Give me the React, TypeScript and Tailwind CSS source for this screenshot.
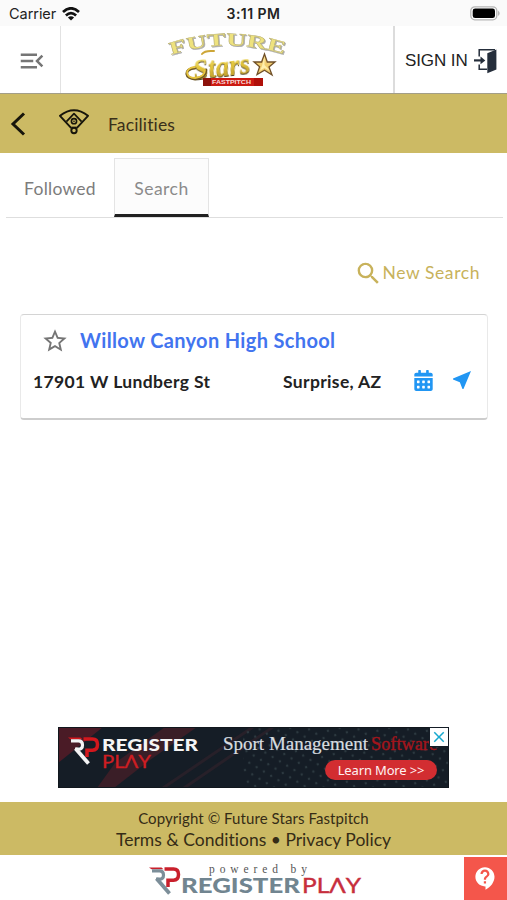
import { MdClose, MdContactSupport, MdMenuOpen, MdNearMe, MdSearch, MdStarBorder } from "react-icons/md";
import { FaCalendarAlt } from "react-icons/fa";

function WifiIcon() {
  return (
    <svg width="18" height="14" viewBox="0 0 18 14" fill="none" stroke="#111" strokeWidth="2.7">
      <path d="M1 5 Q9 -2.4 17 5" />
      <path d="M3.9 8.4 Q9 3.7 14.1 8.4" />
      <path d="M9 13.6 L5.9 10.4 Q9 7.9 12.1 10.4 Z" fill="#111" stroke="none" />
    </svg>
  );
}

function BatteryIcon() {
  return (
    <svg width="31" height="15" viewBox="0 0 31 15">
      <rect x="0.8" y="0.8" width="26" height="13" rx="4" fill="#fff" stroke="#b5b5b5" strokeWidth="1.3" />
      <rect x="2.7" y="2.5" width="22.3" height="9.6" rx="2.4" fill="#000" />
      <path d="M28.2 4.5 Q31 7.3 28.2 10.1 Z" fill="#aaa" />
    </svg>
  );
}

function FutureStarsLogo() {
  return (
    <svg className="overflow-visible" width="122" height="58" viewBox="0 0 122 58">
      <defs>
        <path id="arch" d="M5 26 Q62 7 120 26" />
        <linearGradient id="gold" x1="0" y1="0" x2="0" y2="1">
          <stop offset="0" stopColor="#f9ef8c" />
          <stop offset="0.5" stopColor="#e3c53c" />
          <stop offset="1" stopColor="#b08e2a" />
        </linearGradient>
      </defs>
      <g fontFamily="'Liberation Serif', serif" fontWeight="700">
        <text fontSize="18" fill="#eee27d" stroke="#b5ad78" strokeWidth="0.4" className="[filter:drop-shadow(1px_1px_0.6px_#77777799)]">
          <textPath href="#arch" textLength="115" lengthAdjust="spacingAndGlyphs">FUTURE</textPath>
        </text>
        <text x="27" y="48" transform="rotate(-7 50 38)" fontStyle="italic" fontSize="30" textLength="57" lengthAdjust="spacingAndGlyphs" fill="url(#gold)" className="[filter:drop-shadow(0.8px_1px_0.4px_#4f4225)]">
          Stars
        </text>
      </g>
      <g fill="none" strokeLinecap="round">
        <path d="M29 39 C17 40 19 50 29 50 C36 49 40 46 40 41" stroke="#6f5925" strokeWidth="2.8" />
        <path d="M29 38 C18 39 19 49 29 49 C36 48 39 45 39 41" stroke="#e8c63f" strokeWidth="1.8" />
        <path d="M36 25 C39 21 44 22 48 22" stroke="#cda637" strokeWidth="2" />
      </g>
      <path d="M98.5 25 L101.3 33 L109 33 L103 38 L106 46 L98.5 41.2 L91 45.5 L93.6 37.7 L88 33 L95.6 33 Z" fill="#f2cf72" stroke="#705028" strokeWidth="1.3" />
      <path d="M98.5 27 L98.5 36 L104 42 L98.5 39 L94 41.5 L96 37 Z" fill="#fff0ae" />
      <rect x="37" y="49" width="60" height="8" fill="#cc1a12" />
      <rect x="37" y="49" width="8" height="8" fill="#8c120c" />
      <rect x="88" y="49" width="9" height="8" fill="#b01009" />
      <text x="46" y="55.2" fontFamily="'Liberation Sans', sans-serif" fontWeight="700" fontSize="5.8" fill="#fff" fillOpacity="0.85" textLength="39" lengthAdjust="spacingAndGlyphs">FASTPITCH</text>
    </svg>
  );
}

function SignInIcon() {
  return (
    <svg width="25" height="26" viewBox="0 0 25 26">
      <path d="M6.2 8.5 V1.8 H22 M6.2 16.5 V21.2 H14" fill="none" stroke="#252e3b" strokeWidth="1.5" />
      <path d="M14.3 5.2 L23.4 1.5 V21.5 L14.3 25.2 Z" fill="#252e3b" />
      <path d="M1 12.4 H9" fill="none" stroke="#252e3b" strokeWidth="2.2" />
      <path d="M7.5 8.6 L12.3 12.4 L7.5 16.2 Z" fill="#252e3b" />
    </svg>
  );
}

// Baseball field: outfield fan, infield diamond, mound and home plate
function FieldIcon() {
  return (
    <svg width="30" height="26" viewBox="0 0 30 26" fill="none" stroke="#17150b" strokeWidth="1.9" strokeLinejoin="round">
      <path d="M12.3 19.2 L1 6.8 Q15 -4.2 29 6.8 L17.7 19.2" />
      <path d="M7.4 12.6 L15 4.6 L22.6 12.6" strokeWidth="1.7" />
      <circle cx="15" cy="12.2" r="2.6" strokeWidth="1.6" />
      <circle cx="15" cy="12.2" r="0.4" strokeWidth="1" />
      <circle cx="15" cy="21.6" r="2.7" />
      <path d="M12.4 18.4 H17.6" strokeWidth="1.5" />
    </svg>
  );
}

function Monogram({ left, right }: { left: string; right: string }) {
  return (
    <svg width="32" height="28" viewBox="0 0 32 28" fill="none" strokeWidth="3.2">
      <path d="M0 0.5 H12.5 L14.5 2.3 H2.5 Z" fill={right} stroke="none" />
      <path d="M3 3.8 H10.5 Q14.5 3.8 14.5 8 Q14.5 12.2 10.5 12.2 H7" stroke={left} />
      <path d="M7.5 11.5 L20.5 26.5" stroke={left} strokeWidth="3.8" />
      <path d="M15.5 2.1 H24.5 Q29.5 2.1 29.5 7.6 Q29.5 13.2 24.5 13.2 H19 V20" stroke={right} strokeWidth="3.5" />
    </svg>
  );
}

function AdBanner() {
  return (
    <div className="relative mx-auto mt-[307px] h-[61px] w-[391px] shrink-0 overflow-hidden bg-[#151d26]">
      <svg className="absolute inset-0" width="391" height="61" viewBox="0 0 391 61">
        <defs>
          <pattern id="dots" width="12" height="12" patternUnits="userSpaceOnUse" patternTransform="rotate(-14)">
            <circle cx="3" cy="3" r="1.2" fill="#2d3940" />
            <circle cx="9" cy="9" r="1.2" fill="#2d3940" />
          </pattern>
        </defs>
        <path d="M0 0 H45 L0 36 Z" fill="#4a1b26" />
        <path d="M57 36 L107 0 H139 L92 33 L56 61 H39 Z" fill="#3a1e27" />
        <path d="M105 61 L195 0 M126 61 L215 0" stroke="#272029" strokeWidth="3" />
        <rect x="185" width="206" height="61" fill="url(#dots)" />
        <rect x="0.5" y="0.5" width="390" height="60" fill="none" stroke="#11171d" />
      </svg>
      <div className="relative flex">
        <div className="ml-[10px] mt-[10px]">
          <Monogram left="#f3f3f4" right="#d3171d" />
        </div>
        <svg className="mt-[8px] ml-[2px]" width="100" height="38" viewBox="0 0 100 38" fontFamily="Lato, sans-serif">
          <text x="0" y="16" fontSize="17.5" fontWeight="900" fill="#f5f5f5" textLength="96" lengthAdjust="spacingAndGlyphs">REGISTER</text>
          <text x="0" y="33" fontSize="16.5" fill="#cf1d22" stroke="#cf1d22" strokeWidth="0.3" textLength="49" lengthAdjust="spacingAndGlyphs">PLΛY</text>
        </svg>
        <svg className="ml-[20px] mt-[6px]" width="220" height="26" viewBox="0 0 220 26" fontFamily="'Liberation Serif', serif" fontSize="18">
          <text x="1" y="17" fill="#d8dde0" stroke="#d8dde0" strokeWidth="0.2" textLength="145" lengthAdjust="spacingAndGlyphs">Sport Management</text>
          <text x="149" y="17" fill="#a3151c" stroke="#a3151c" strokeWidth="0.4" textLength="66" lengthAdjust="spacingAndGlyphs">Software</text>
        </svg>
      </div>
      <button className="absolute left-[267px] top-[33px] h-5 w-28 rounded-full bg-[#d22d31] font-['Noto_Sans',sans-serif] text-[13px] leading-5 tracking-[-0.15px] text-[#fff1f1]">
        Learn More &gt;&gt;
      </button>
      <span className="absolute right-0 top-0 flex size-5 items-center justify-center border border-[#151d26] bg-white text-[#18a9cf]">
        <MdClose size={18} className="shrink-0" />
      </span>
    </div>
  );
}

export default function App() {
  return (
    <div className="flex h-[900px] w-[507px] flex-col overflow-hidden bg-white font-[Lato,sans-serif] text-[#222]">
      <div className="grid h-[26px] shrink-0 grid-cols-3 items-center bg-[#fafafa] pt-px font-[Inter,sans-serif] text-[14.5px]">
        <div className="flex items-center gap-[6px] pl-[9px]">
          <span className="tracking-[-0.05px]">Carrier</span>
          <WifiIcon />
        </div>
        <span className="text-center text-[14px] font-semibold tracking-[0.45px]">3:11 PM</span>
        <div className="flex justify-end pr-[6px]">
          <BatteryIcon />
        </div>
      </div>

      <header className="flex h-[68px] shrink-0 border-b border-[#a39e88] bg-white">
        <button className="flex w-[61px] items-center justify-center border-r border-[#e2e2e2] pl-[3px] pt-0.5 text-[#757575]">
          <MdMenuOpen size={30} />
        </button>
        <div className="flex flex-1 justify-center pt-[3px]">
          <FutureStarsLogo />
        </div>
        <button className="flex w-[114px] items-center border-l-2 border-[#dcdcdc] pl-[10px] pt-0.5 font-['Liberation_Sans',sans-serif] text-[17px] tracking-[-0.1px]">
          <span className="w-[68px] whitespace-nowrap text-left">SIGN IN</span>
          <SignInIcon />
        </button>
      </header>

      <div className="flex h-[59px] shrink-0 items-center bg-[#ccba64] pt-px">
        <svg className="ml-[10px]" width="16" height="24" viewBox="0 0 16 24" fill="none" stroke="#17150b" strokeWidth="3">
          <path d="M14 1.5 L3 12 L14 22.5" />
        </svg>
        <span className="ml-[33px] -mt-1">
          <FieldIcon />
        </span>
        <h1 className="ml-[19px] mt-0.5 text-[17.5px] tracking-[0.15px] text-[#392f1a]">Facilities</h1>
      </div>

      <nav className="ml-[6px] mr-[4px] flex h-[65px] shrink-0 items-end border-b border-[#dedede] text-[17.5px] text-[#7c7c7c]">
        <button className="h-[59px] w-[108px] pt-[3px] tracking-[0.25px]">Followed</button>
        <button className="h-[59px] w-[95px] border border-b-[3px] border-[#e4e4e4] border-b-[#202020] bg-[#fcfcfc] pt-[5px] tracking-[0.5px] text-[#8b8b8b]">Search</button>
      </nav>

      <div className="mt-[41px] flex h-7 shrink-0 items-center justify-end pr-[27px] text-[17.5px] text-[#c8b25b]">
        <MdSearch size={29} />
        <span className="tracking-[0.58px]">New Search</span>
      </div>

      <section className="ml-[20px] mr-[19px] mt-[27px] h-[106px] shrink-0 rounded border border-[#e9e9e9] border-t-[#d4d4d4] border-b-2 border-b-[#cdcdcd] bg-white">
        <div className="mt-[12px] flex h-7 items-center pl-[20px]">
          <MdStarBorder size={28} className="text-[#757575]" />
          <h2 className="ml-[11px] -mt-0.5 whitespace-nowrap text-[20px] font-bold tracking-[0.34px] text-[#4274ef]">Willow Canyon High School</h2>
        </div>
        <div className="mt-[13px] flex h-7 items-center pl-[12px] text-[17.5px] font-bold">
          <span className="w-[250px] pt-px tracking-[0.35px]">17901 W Lundberg St</span>
          <span className="w-[130px] pt-px tracking-[0.35px]">Surprise, AZ</span>
          <FaCalendarAlt size={21} className="-mt-1 text-[#2196f3]" />
          <MdNearMe size={24} className="-mt-1 ml-[16px] text-[#2196f3]" />
        </div>
      </section>

      <AdBanner />

      <footer className="mt-[14px] h-[53px] shrink-0 bg-[#ccba64] pt-[5px] text-center text-[#352c16]">
        <p className="text-[15px] leading-[22px] tracking-[0.08px]">Copyright © Future Stars Fastpitch</p>
        <p className="text-[17.5px] leading-[21px] tracking-[0.01px]">Terms &amp; Conditions • Privacy Policy</p>
      </footer>

      <div className="flex flex-1 items-end justify-between">
        <div className="ml-[149px] flex h-[40px] items-start">
          <span className="mt-[7px]">
            <Monogram left="#7c8e99" right="#c9202c" />
          </span>
          <svg width="181" height="38" viewBox="0 0 181 38" fontFamily="Lato, sans-serif">
            <text x="28" y="13" fontFamily="'Liberation Serif', serif" fontSize="11.5" fill="#555" textLength="98">powered by</text>
            <text x="0" y="33" fontSize="20.5" fontWeight="900" fill="#718590" textLength="119" lengthAdjust="spacingAndGlyphs">REGISTER</text>
            <text x="121" y="33" fontSize="20.5" fill="#c72e3d" stroke="#c72e3d" strokeWidth="0.4" textLength="59" lengthAdjust="spacingAndGlyphs">PLΛY</text>
          </svg>
        </div>
        <button className="flex h-[43px] w-[43px] items-center justify-center bg-[#f4564b] text-white">
          <MdContactSupport size={27} />
        </button>
      </div>
    </div>
  );
}
